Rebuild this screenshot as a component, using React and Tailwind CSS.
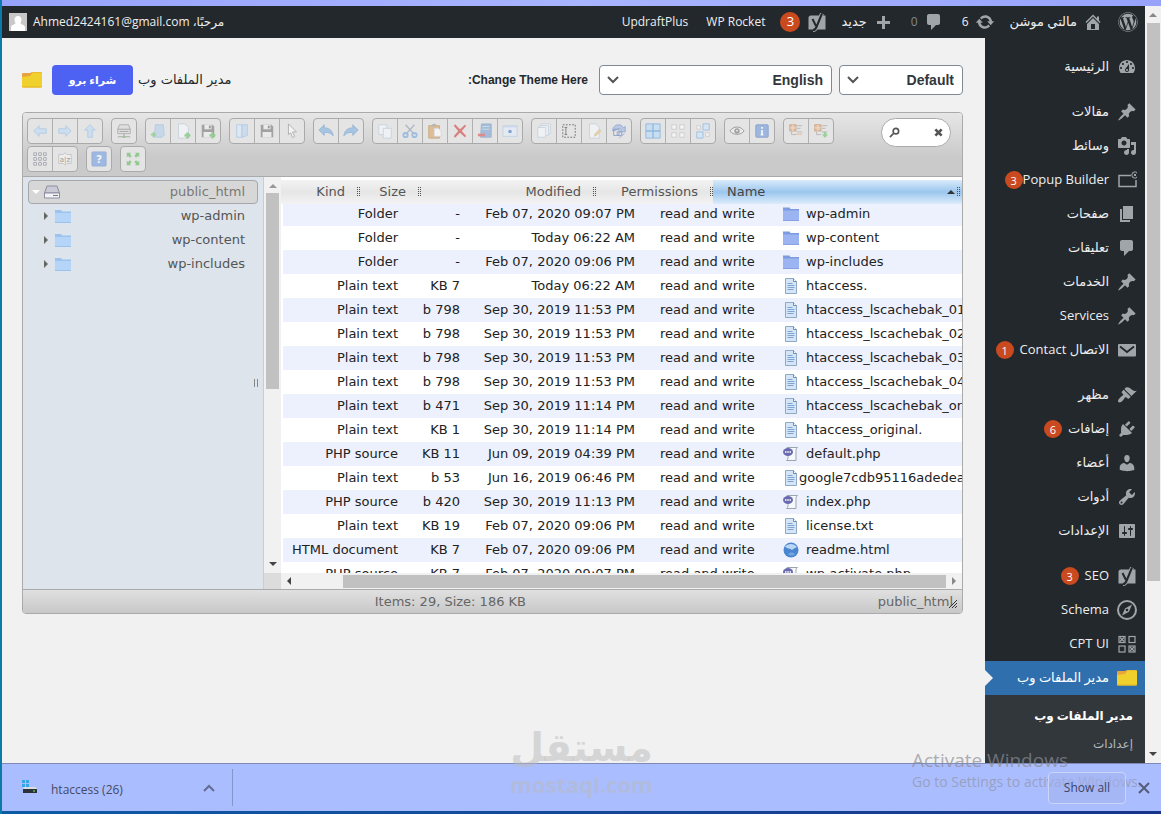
import { useState } from "react";
import { FaWordpress } from "react-icons/fa";

// Dashicons-style glyphs, 20x20 grid.
const glyphs = {
  dashboard:
    "M3.76 16h12.48c1.1-1.37 1.76-3.11 1.76-5 0-4.42-3.58-8-8-8s-8 3.58-8 8c0 1.89.66 3.63 1.76 5zM10 4c.55 0 1 .45 1 1s-.45 1-1 1-1-.45-1-1 .45-1 1-1zM6 6c.55 0 1 .45 1 1s-.45 1-1 1-1-.45-1-1 .45-1 1-1zm8 0c.55 0 1 .45 1 1s-.45 1-1 1-1-.45-1-1 .45-1 1-1zm-5.37 5.55L12 7v6c0 1.1-.9 2-2 2s-2-.9-2-2c0-.57.24-1.08.63-1.45zM4 10c.55 0 1 .45 1 1s-.45 1-1 1-1-.45-1-1 .45-1 1-1zm12 0c.55 0 1 .45 1 1s-.45 1-1 1-1-.45-1-1 .45-1 1-1zm-5 3c0-.55-.45-1-1-1s-1 .45-1 1 .45 1 1 1 1-.45 1-1z",
  pin: "M10.44 3.02l1.82-1.82 6.36 6.35-1.83 1.82c-1.05-.68-2.48-.57-3.41.36l-.75.75c-.92.93-1.04 2.35-.35 3.41l-1.83 1.82-2.41-2.41-2.8 2.79c-.42.42-3.38 2.71-3.8 2.29s1.86-3.39 2.28-3.81l2.79-2.79L4.1 9.36l1.83-1.82c1.05.69 2.48.57 3.4-.36l.75-.75c.93-.92 1.05-2.35.36-3.41z",
  media:
    "M13 11V4c0-.55-.45-1-1-1h-1.67L9 1H5L3.67 3H2c-.55 0-1 .45-1 1v7c0 .55.45 1 1 1h10c.55 0 1-.45 1-1zM7 4.500c1.38 0 2.500 1.120 2.500 2.500S8.380 9.500 7 9.500 4.500 8.380 4.500 7 5.620 4.500 7 4.500zM14 6h5v10.500c0 1.380-1.120 2.500-2.500 2.500S14 17.880 14 16.500s1.120-2.500 2.500-2.500c.17 0 .34.02.5.05V9h-3V6zm-4 8.050V13h2v3.500c0 1.380-1.120 2.500-2.500 2.500S7 17.880 7 16.500 8.120 14 9.500 14c.17 0 .34.02.5.05z",
  page: "M6 15V2h10v13H6zm-1 1h8v2H3V5h2v11z",
  comment:
    "M5 2h9c1.1 0 2 .9 2 2v7c0 1.1-.9 2-2 2h-2l-5 5v-5H5c-1.1 0-2-.9-2-2V4c0-1.1.9-2 2-2z",
  brush:
    "M14.48 11.06L7.41 3.99l1.5-1.5c.5-.56 2.3-.47 3.51.32 1.21.8 1.43 1.28 2.91 2.1 1.18.64 2.45 1.26 4.45.85zm-.71.71L6.7 4.7 4.93 6.47c-.39.39-.39 1.02 0 1.41l1.06 1.06c.39.39.39 1.03 0 1.42-.6.6-1.43 1.11-2.21 1.69-.35.26-.7.53-1.01.84C1.43 14.23.4 16.08 1.4 17.07c.99 1 2.84-.03 4.18-1.36.31-.31.58-.66.85-1.02.57-.78 1.08-1.61 1.69-2.21.39-.39 1.02-.39 1.41 0l1.06 1.06c.39.39 1.02.39 1.41 0z",
  plug: "M13.11 4.36L9.87 7.6 8 5.73l3.24-3.24c.35-.34 1.05-.2 1.56.32.52.51.66 1.21.31 1.55zm-8 1.77l.91-1.12 9.01 9.01-1.19.84c-.71.71-2.63 1.16-3.82 1.16H6.14L4.9 17.26c-.59.59-1.54.59-2.12 0-.59-.58-.59-1.53 0-2.12l1.24-1.24v-3.88c0-1.13.4-3.19 1.09-3.89zm7.26 3.97l3.24-3.24c.34-.35 1.04-.21 1.55.31.52.51.66 1.21.31 1.55l-3.24 3.25z",
  user: "M10 9.25c-2.27 0-2.73-3.44-2.73-3.44C7 4.02 7.82 2 9.97 2c2.16 0 2.98 2.02 2.71 3.81 0 0-.41 3.44-2.68 3.44zm0 2.57L12.72 10c2.39 0 4.52 2.33 4.52 4.53v2.49s-3.65 1.13-7.24 1.13c-3.65 0-7.24-1.13-7.24-1.13v-2.49c0-2.25 1.94-4.48 4.47-4.48z",
  wrench:
    "M16.68 9.77c-1.34 1.34-3.3 1.67-4.95.99l-5.41 6.52c-.99.99-2.59.99-3.58 0s-.99-2.59 0-3.57l6.52-5.42c-.68-1.65-.35-3.61.99-4.95 1.28-1.28 3.12-1.62 4.72-1.06l-2.89 2.89 2.82 2.82 2.86-2.87c.53 1.58.18 3.39-1.08 4.65zM3.81 16.21c.4.39 1.04.39 1.43 0 .4-.4.4-1.04 0-1.43-.39-.4-1.03-.4-1.43 0-.39.39-.39 1.03 0 1.43z",
  sliders:
    "M18 16V4c0-.55-.45-1-1-1H3c-.55 0-1 .45-1 1v12c0 .55.45 1 1 1h14c.55 0 1-.45 1-1zM8 11h1c.55 0 1 .45 1 1s-.45 1-1 1H8v1.5c0 .28-.22.5-.5.5s-.5-.22-.5-.5V13H6c-.55 0-1-.45-1-1s.45-1 1-1h1V5.5c0-.28.22-.5.5-.5s.5.22.5.5V11zm5-2h-1c-.55 0-1-.45-1-1s.45-1 1-1h1V5.5c0-.28.22-.5.5-.5s.5.22.5.5V7h1c.55 0 1 .45 1 1s-.45 1-1 1h-1v5.5c0 .28-.22.5-.5.5s-.5-.22-.5-.5V9z",
  home: "M16 8.5l1.53 1.53-1.06 1.06L10 4.6l-6.47 6.49-1.06-1.06L10 2.5l4 4v-2h2v4zm-6-2.46l6 5.99V18H4v-5.97zM12 17v-5H8v5h4z",
  update:
    "M10.2 3.28c3.53 0 6.43 2.61 6.92 6h2.08l-3.5 4-3.5-4h2.32c-.45-1.97-2.21-3.45-4.32-3.45-1.45 0-2.73.71-3.54 1.78L4.95 5.66C6.23 4.2 8.11 3.28 10.2 3.28zm-.4 13.44c-3.52 0-6.43-2.61-6.92-6H.8l3.5-4c1.17 1.33 2.33 2.67 3.5 4H5.48c.45 1.97 2.21 3.45 4.32 3.45 1.45 0 2.73-.71 3.54-1.78l1.71 1.95c-1.28 1.46-3.15 2.38-5.25 2.38z",
  plus: "M17 9v3h-5v5H9v-5H4V9h5V4h3v5h5z",
};

function Glyph({ name }) {
  if (name === "folder") return <YellowFolder />;
  return (
    <svg viewBox="0 0 20 20" className="size-5 shrink-0" fill="currentColor" fillRule="evenodd">
      {glyphs[name] && <path d={glyphs[name]} />}
      {name === "popup" && (
        <g fill="none" stroke="currentColor">
          <path d="M14 5.5H2v11h17V10" strokeWidth="1.5" />
          <circle cx="18" cy="5" r="3.2" />
          <path d="M16.7 3.7l2.6 2.6m0-2.6l-2.6 2.6" />
        </g>
      )}
      {name === "mail" && (
        <>
          <rect x="1" y="4" width="18" height="12.5" rx="1" />
          <path d="M3 6.5l7 5.5 7-5.5" fill="none" stroke="#23282d" strokeWidth="1.8" />
        </>
      )}
      {name === "yoast" && (
        <>
          <path d="M4 3.500h14.500v14H1.500V6A2.500 2.500 0 0 1 4 3.500z" />
          <path d="M5.500 7l3.500 7M15 1.500L9.500 15c-.8 2-1.700 3-3.500 3" fill="none" stroke="currentColor" strokeWidth="4" />
          <path d="M5.500 7l3.500 7M15 1.500L9.500 15c-.8 2-1.700 3-3.500 3" fill="none" stroke="#23282d" strokeWidth="2" />
        </>
      )}
      {name === "compass" && (
        <>
          <circle cx="10" cy="10" r="9" fill="none" stroke="currentColor" strokeWidth="2" />
          <path d="M15 4.500l-3 7.200L5 15.500l3-7z" />
          <circle cx="10" cy="10" r="1.300" fill="#23282d" />
        </>
      )}
      {name === "cpt" && (
        <g fill="none" stroke="currentColor" strokeWidth="1.200">
          <rect x="2" y="2.500" width="6" height="6" />
          <rect x="12" y="2.500" width="6" height="6" />
          <rect x="2" y="12" width="6" height="6" />
          <rect x="12" y="12" width="6" height="6" />
          <path d="M3 3.500l4 4m0-4l-4 4M13 13l4 4m0-4l-4 4" />
        </g>
      )}
    </svg>
  );
}

function YellowFolder() {
  return (
    <svg viewBox="0 0 20 16" className="h-4 w-5 shrink-0">
      <path d="M0 2a1 1 0 0 1 1-1h7l2-1h9a1 1 0 0 1 1 1v5H0z" fill="#e8a33d" />
      <path d="M0 5l8-1 2.500-3.500H19a1 1 0 0 1 1 1V14.500a1 1 0 0 1-1 1H1a1 1 0 0 1-1-1z" fill="#f0d02c" />
      <path d="M0 14.500h20a1 1 0 0 1-1 1H1a1 1 0 0 1-1-1z" fill="#e2b41f" />
    </svg>
  );
}

const menu = [
  [{ icon: "dashboard", label: "الرئيسية" }],
  [
    { icon: "pin", label: "مقالات" },
    { icon: "media", label: "وسائط" },
    { icon: "popup", label: "Popup Builder", count: 3, tight: true },
    { icon: "page", label: "صفحات" },
    { icon: "comment", label: "تعليقات" },
    { icon: "pin", label: "الخدمات" },
    { icon: "pin", label: "Services" },
    { icon: "mail", label: "الاتصال Contact", count: 1 },
  ],
  [
    { icon: "brush", label: "مظهر" },
    { icon: "plug", label: "إضافات", count: 6 },
    { icon: "user", label: "أعضاء" },
    { icon: "wrench", label: "أدوات" },
    { icon: "sliders", label: "الإعدادات" },
  ],
  [
    { icon: "yoast", label: "SEO", count: 3 },
    { icon: "compass", label: "Schema" },
    { icon: "cpt", label: "CPT UI" },
    { icon: "folder", label: "مدير الملفات وب", current: true },
  ],
];

// Toolbar drawings, 18x18 grid.
const blue = "#8fbbe8";
const page = "#f8fbff";
const arrow = "M2 9l6-6v3.500h8v5H8V15z";
const diskette = (
  <>
    <path d="M2 2h12l2 2v12H2z" fill="#777" />
    <path d="M5 2h8v5H5zM4 10h10v6H4z" fill="#eee" />
    <path d="M10 3h2v3h-2z" fill="#666" />
  </>
);
const paper = <path d="M4 1h7l4 4v12H4z" fill={page} stroke="#b5c7da" />;
const greenPlus = <path d="M11 13h2v-2h2v2h2v2h-2v2h-2v-2h-2z" fill="#65c965" stroke="#45a845" strokeWidth=".5" />;
const tree = (
  <>
    <rect x="2" y="2" width="7" height="7" fill="#e3a878" stroke="#bb8050" />
    <path d="M5.500 2v7M2 5.500h7" stroke="#f4dcc8" />
    <path d="M10 3h6M10 6h4M4 10v3h5M10 10h6" fill="none" stroke="#999" />
  </>
);

const tools = {
  back: <path d={arrow} fill="#bfdcf6" stroke={blue} />,
  forward: <path d={arrow} fill="#bfdcf6" stroke={blue} transform="rotate(180 9 9)" />,
  up: <path d={arrow} fill="#bfdcf6" stroke={blue} transform="rotate(90 9 9)" />,
  netmount: (
    <>
      <path d="M4 2h10l2 5v5H2V7z" fill="#ddd" stroke="#888" />
      <path d="M2 7h14M4 9.500h10M9 12v4M2 15.500h14" stroke="#777" />
      <circle cx="9" cy="15.500" r="1.500" fill="#5ab55a" />
    </>
  ),
  mkdir: (
    <>
      <path d="M6 2h9l1 12-3 2H5z" fill="#b4cfe9" stroke={blue} />
      <path d="M1 12h2v-2h2v2h2v2H5v2H3v-2H1z" fill="#65c965" />
    </>
  ),
  mkfile: <>{paper}{greenPlus}</>,
  upload: <>{diskette}{greenPlus}</>,
  open: (
    <>
      <path d="M3 2h6v14H3z" fill="#dcebfa" stroke={blue} />
      <path d="M9 2h6v12l-6 2z" fill="#bdd8f3" stroke={blue} />
    </>
  ),
  download: diskette,
  getfile: <path d="M5 1l9 9H9.500l2.500 5-2.500 1.500L7.500 11 5 13z" fill="#fff" stroke="#888" />,
  undo: <path d="M1 8l6-6v3.500c5 0 9 2 10 9-2-3-5-4-10-4V14z" fill="#7fb2e2" stroke="#6396c8" />,
  redo: <path d="M17 8l-6-6v3.500c-5 0-9 2-10 9 2-3 5-4 10-4V14z" fill="#7fb2e2" stroke="#6396c8" />,
  copy: (
    <>
      <path d="M2 2h9v11H2z" fill={page} stroke="#b5c7da" />
      <path d="M7 6h9v11H7z" fill={page} stroke="#b5c7da" />
    </>
  ),
  cut: (
    <>
      <path d="M4 2l10 11M14 2L4 13" stroke="#8b9db3" strokeWidth="1.500" />
      <circle cx="4" cy="13.500" r="2.500" fill="none" stroke="#6fa3dd" strokeWidth="2" />
      <circle cx="14" cy="13.500" r="2.500" fill="none" stroke="#6fa3dd" strokeWidth="2" />
    </>
  ),
  paste: (
    <>
      <path d="M2 3h12v14H2z" fill="#d8a362" stroke="#b58243" />
      <path d="M6 1h4v3H6z" fill="#999" />
      <path d="M8 6h5l3 3v6H8z" fill="#fff" stroke="#ccc" />
    </>
  ),
  rm: <path d="M2 3l1.500-1.500L9 7l5.500-5L16 3l-5 6 5 5.500-1.500 1.500L9 11l-5.500 5.500L2 15l5-6z" fill="#d0403c" />,
  empty: (
    <>
      <path d="M5 1h11v15H4z" fill="#7ba3d2" stroke="#6f97c4" />
      <path d="M6 4h8M6 7h8" stroke="#c8dcf2" />
      <path d="M1 12h8v3H1z" fill="#d9534f" />
    </>
  ),
  hide: (
    <>
      <path d="M1 3h16v12H1z" fill="#e5effa" stroke="#a9c4e2" />
      <path d="M1 3h16v2H1z" fill="#bcd3ee" />
      <circle cx="9" cy="9.500" r="2" fill="#3f78bf" />
    </>
  ),
  duplicate: (
    <>
      <path d="M6 1h10v11H6z" fill={page} stroke="#b5c7da" />
      <path d="M4 3h10v11H4z" fill={page} stroke="#b5c7da" />
      <path d="M2 5h9v11H2z" fill={page} stroke="#b5c7da" />
    </>
  ),
  rename: (
    <>
      <path d="M2 2h14v14H2z" fill="none" stroke="#222" strokeDasharray="2 1.500" />
      <path d="M4 5h3M4 13h3M5.500 5v8" stroke="#333" />
    </>
  ),
  edit: (
    <>
      {paper}
      <path d="M10 12l5-5 2 2-5 5-3 1z" fill="#e8c57a" stroke="#b8b08a" strokeWidth=".5" />
    </>
  ),
  resize: (
    <>
      <path d="M2 9a6.500 6.500 0 0 1 12-4l2-1v6h-6l2-2.500A4 4 0 0 0 6 8z" fill="#9bb7e6" stroke="#6684c4" />
      <path d="M3 7h6v7H3zM7 10h5v4H7z" fill="none" stroke="#5674bc" />
      <path d="M9 17l6-5" stroke="#6684c4" />
    </>
  ),
  selectall: (
    <>
      <path d="M1 1h16v16H1z" fill="#b9dafa" stroke="#5b9bd8" />
      <path d="M9 1v16M1 9h16" stroke="#5b9bd8" strokeWidth="1.500" />
    </>
  ),
  selectnone: <path d="M2 2h5v5H2zM11 2h5v5h-5zM2 11h5v5H2zM11 11h5v5h-5z" fill="#fff" stroke="#bbb" />,
  invert: (
    <>
      <path d="M9 1h7v7H9zM2 10h7v7H2z" fill="#cfe4fb" stroke="#6ea5e0" />
      <path d="M2 3h4v4H2zM12 11h4v4h-4z" fill="#fff" stroke="#bbb" />
    </>
  ),
  quicklook: (
    <>
      <path d="M1 9c4-6 12-6 16 0-4 5-12 5-16 0z" fill="#eee" stroke="#666" />
      <circle cx="9" cy="9" r="3" fill="#777" />
      <circle cx="9" cy="8.500" r="1" fill="#fff" />
    </>
  ),
  info: (
    <>
      <rect x="2" y="2" width="14" height="14" rx="1" fill="#6f98dc" stroke="#5078bd" />
      <path d="M9 4.500v2M9 8v5M7.500 13h3" stroke="#fff" strokeWidth="2" />
    </>
  ),
  extract: <>{tree}<path d="M9 12.500h7" stroke="#e0915a" /></>,
  archive: <>{tree}<path d="M12 10h3v3h2l-3.500 4-3.500-4h2z" fill="#65c965" /></>,
  view: (
    <path
      d="M2 2h3v3H2zM7.500 2h3v3h-3zM13 2h3v3h-3zM2 7.500h3v3H2zM7.500 7.500h3v3h-3zM13 7.500h3v3h-3zM2 13h3v3H2zM7.500 13h3v3h-3zM13 13h3v3h-3z"
      fill="#f6f6f6"
      stroke="#777788"
    />
  ),
  sort: (
    <>
      <path d="M2 4h5l2-2 2 2h5v10h-5l-2 2-2-2H2z" fill="#f6f6f6" stroke="#aaa" />
      <text x="9" y="12" textAnchor="middle" fontSize="8" fill="#666">a|z</text>
    </>
  ),
  help: (
    <>
      <rect x="1" y="1" width="16" height="16" rx="1" fill="#6f9be0" stroke="#6d92cd" />
      <text x="9" y="13.500" textAnchor="middle" fontSize="12" fontWeight="bold" fill="#fff">?</text>
    </>
  ),
  fullscreen: (
    <path
      d="M2 2h5L5.500 3.500l2 2-2 2-2-2L2 7zM16 2v5l-1.500-1.500-2 2-2-2 2-2L11 2zM2 16v-5l1.500 1.500 2-2 2 2-2 2L7 16zM16 16h-5l1.500-1.500-2-2 2-2 2 2L16 11z"
      fill="#5cb85c"
    />
  ),
};

const toolGroups = [
  ["back", "forward", "up"],
  ["netmount"],
  ["mkdir", "mkfile", "upload"],
  ["open", "download", "getfile"],
  ["undo", "redo"],
  ["copy", "cut", "paste", "rm", "empty", "hide"],
  ["duplicate", "rename", "edit", "resize"],
  ["selectall", "selectnone", "invert"],
  ["quicklook", "info"],
  ["extract", "archive"],
  ["view", "sort"],
  ["help"],
  ["fullscreen"],
];

const files = [
  ["Folder", "-", "Feb 07, 2020 09:07 PM", "folder", "wp-admin"],
  ["Folder", "-", "Today 06:22 AM", "folder", "wp-content"],
  ["Folder", "-", "Feb 07, 2020 09:06 PM", "folder", "wp-includes"],
  ["Plain text", "KB 7", "Today 06:22 AM", "text", "htaccess."],
  ["Plain text", "b 798", "Sep 30, 2019 11:53 PM", "text", "htaccess_lscachebak_01"],
  ["Plain text", "b 798", "Sep 30, 2019 11:53 PM", "text", "htaccess_lscachebak_02"],
  ["Plain text", "b 798", "Sep 30, 2019 11:53 PM", "text", "htaccess_lscachebak_03"],
  ["Plain text", "b 798", "Sep 30, 2019 11:53 PM", "text", "htaccess_lscachebak_04"],
  ["Plain text", "b 471", "Sep 30, 2019 11:14 PM", "text", "htaccess_lscachebak_ori"],
  ["Plain text", "KB 1", "Sep 30, 2019 11:14 PM", "text", "htaccess_original."],
  ["PHP source", "KB 11", "Jun 09, 2019 04:39 PM", "php", "default.php"],
  ["Plain text", "b 53", "Jun 16, 2019 06:46 PM", "text", "google7cdb95116adedea2"],
  ["PHP source", "b 420", "Sep 30, 2019 11:13 PM", "php", "index.php"],
  ["Plain text", "KB 19", "Feb 07, 2020 09:06 PM", "text", "license.txt"],
  ["HTML document", "KB 7", "Feb 07, 2020 09:06 PM", "html", "readme.html"],
  ["PHP source", "KB 7", "Feb 07, 2020 09:07 PM", "php", "wp-activate.php"],
];

function FileIcon({ type }) {
  return (
    <svg viewBox="0 0 16 16" className="size-4 shrink-0">
      {type === "folder" && (
        <>
          <path d="M0 1.500h6.500l1 1.500H16v11.500H0z" fill="#7d9ce0" />
          <path d="M0 4.500h16v10H0z" fill="#9db4f3" />
          <path d="M0 14h16v.8H0z" fill="#7f97dc" />
        </>
      )}
      {type === "text" && (
        <>
          <path d="M2.500.5h8l3 3v12h-11z" fill="#d3e5f7" stroke="#8fa9c4" />
          <path d="M10.500.5v3h3" fill="#fff" stroke="#6f8cab" />
          <path d="M4.500 5.500h5M4.500 7.500h7M4.500 9.500h7M4.500 11.500h6" stroke="#7fa5cf" />
        </>
      )}
      {type === "php" && (
        <>
          <path d="M4 1.500h10.500c-1.500 1-1.500 2-1.500 4v9H3.500c1.500-1 1.500-2 1.500-4z" fill="#f7f8fa" stroke="#9aa5b2" />
          <ellipse cx="5" cy="6" rx="5" ry="4" fill="#6a6bae" />
          <path d="M2 6h1.500M4.300 6h1.500M6.600 6H8" stroke="#fff" strokeWidth="1.500" />
        </>
      )}
      {type === "html" && (
        <>
          <circle cx="8" cy="8" r="7.500" fill="#4a86d0" />
          <path d="M2 4.500C5 1 11 1 14 5c-2 1.500-3 1-5 3-2-2-4-.5-7-3.500z" fill="#b9d7f5" />
          <path d="M5 12c2-2 5-2 7 0-2 2-5 2-7 0z" fill="#6fa6e4" />
        </>
      )}
    </svg>
  );
}

function Tri({ className, dir = "up" }) {
  const points = { up: "0,5 4,1 8,5", down: "0,1 4,5 8,1", left: "6,0 2,4 6,8", right: "2,0 6,4 2,8" };
  const vertical = dir === "left" || dir === "right";
  return (
    <svg viewBox={vertical ? "0 0 8 8" : "0 0 8 6"} className={`shrink-0 ${className}`} fill="currentColor">
      <polygon points={points[dir]} />
    </svg>
  );
}

function Chevron({ className }) {
  return (
    <svg viewBox="0 0 12 8" className={className} fill="none" stroke="currentColor" strokeWidth="2">
      <path d="M1 1l5 5 5-5" />
    </svg>
  );
}

function Grip() {
  return (
    <svg viewBox="0 0 3 10" className="h-[10px] w-[3px] shrink-0 text-neutral-600">
      <path d="M.5 0v10M2.500 0v10" stroke="currentColor" strokeDasharray="1 1" />
    </svg>
  );
}

function Count({ children }) {
  return (
    <span className="flex size-[18px] items-center justify-center rounded-full bg-[#ca4a1f] text-[11px] leading-none text-white">
      {children}
    </span>
  );
}

function AdminBar() {
  return (
    <header className="flex h-8 shrink-0 items-center justify-between bg-[#23282d] px-[7px] text-[12px] font-medium text-[#eee]">
      <nav className="flex items-center text-[#a0a5aa]">
        <a href="#wp" aria-label="WordPress"><FaWordpress className="size-[20px]" /></a>
        <a href="#site" className="ms-[15px] flex items-center gap-[6px]">
          <Glyph name="home" />
          <span className="text-[13px] text-[#eee]">مالتي موشن</span>
        </a>
        <a href="#updates" className="ms-[15px] flex items-center gap-[6px]">
          <Glyph name="update" />
          <span className="text-[#eee]">6</span>
        </a>
        <a href="#comments" className="ms-[18px] flex items-center gap-[6px]">
          <Glyph name="comment" />
          <span className="text-[#82878c]">0</span>
        </a>
        <a href="#new" className="ms-[18px] flex items-center gap-[6px]">
          <Glyph name="plus" />
          <span className="text-[13px] text-[#eee]">جديد</span>
        </a>
        <a href="#seo" className="ms-[14px] flex items-center gap-[7px]">
          <Glyph name="yoast" />
          <span className="flex size-5 items-center justify-center rounded-full bg-[#ca4a1f] text-[13px] text-white">3</span>
        </a>
        <a href="#rocket" className="ms-[15px] text-[#eee]">WP Rocket</a>
        <a href="#updraft" className="ms-[18px] text-[#eee]">UpdraftPlus</a>
      </nav>
      <a href="#profile" className="flex items-center gap-[6px]">
        <span dir="rtl">مرحبًا، Ahmed2424161@gmail.com</span>
        <svg viewBox="0 0 18 18" className="size-[18px]">
          <path d="M0 0h18v18H0z" fill="#c8c8c8" />
          <path d="M9 3a3.500 3.500 0 0 1 3.500 4c-.3 2-1 3-1 3 0 1.500 4 1.500 4.500 4v4H2v-4c.5-2.500 4.500-2.500 4.500-4 0 0-.7-1-1-3A3.500 3.500 0 0 1 9 3z" fill="#fff" />
        </svg>
      </a>
    </header>
  );
}

function Sidebar() {
  return (
    <aside className="w-40 shrink-0 bg-[#23282d] pt-3 text-[13px] font-medium text-[#eee]">
      <nav className="flex flex-col gap-[11px]">
        {menu.map((group, i) => (
          <ul key={i}>
            {group.map((item, j) => (
              <li key={j}>
                <a
                  href="#menu"
                  className={`relative flex h-[34px] items-center whitespace-nowrap ${item.current ? "bg-[#306fad] text-white" : ""}`}
                >
                  <span className="flex w-9 shrink-0 justify-center text-[#a0a5aa]">
                    <Glyph name={item.icon} />
                  </span>
                  <span className={`flex items-center ${item.tight ? "" : "gap-[6px]"}`}>
                    {item.label}
                    {item.count && <Count>{item.count}</Count>}
                  </span>
                  {item.current && (
                    <span className="absolute left-0 border-8 border-r-0 border-transparent border-l-[#f1f1f1]" />
                  )}
                </a>
              </li>
            ))}
          </ul>
        ))}
      </nav>
      <ul className="h-full bg-[#32373c] px-3 pt-[7px] text-[12px]">
        <li><a href="#fm" className="block font-bold leading-7 text-white">مدير الملفات وب</a></li>
        <li><a href="#settings" className="block leading-7 text-[#b4b9be]">إعدادات</a></li>
      </ul>
    </aside>
  );
}

function Picker({ label, value, className }) {
  return (
    <span className={`relative block h-[30px] ${className}`}>
      <select
        aria-label={label}
        defaultValue={value}
        className="h-full w-full appearance-none rounded-[4px] border border-[#7e8993] bg-white px-2 font-['Liberation_Sans',sans-serif] text-[14px] font-bold text-[#32373c]"
      >
        <option>{value}</option>
      </select>
      <Chevron className="pointer-events-none absolute left-2 top-[11px] h-2 w-3 text-[#555]" />
    </span>
  );
}

function Toolbar() {
  const [query, setQuery] = useState("");
  return (
    <div className="flex items-start border-b border-[#aaa] bg-linear-to-b from-[#e6e6e6] to-[#cacaca] to-70% px-1 pt-[5px] pb-1 pe-[11px]">
      <div className="flex flex-1 flex-wrap gap-x-[8px] gap-y-[2px]">
        {toolGroups.map((group, i) => (
          <div key={i} className="flex overflow-hidden rounded-[4px] border border-[#aaa] bg-[#e4e4e4]">
            {group.map((name) => (
              <button
                key={name}
                type="button"
                aria-label={name}
                className="flex h-6 w-[25px] items-center justify-center border-l border-[#b0b0b0] first:w-6 first:border-l-0"
              >
                <svg viewBox="0 0 18 18" className="size-4 opacity-60">
                  {tools[name]}
                </svg>
              </button>
            ))}
          </div>
        ))}
      </div>
      <label className="flex h-[29px] w-[70px] items-center gap-1 rounded-full border border-[#aaa] bg-white px-[7px]">
        <svg viewBox="0 0 12 12" className="size-[11px] shrink-0" fill="none" stroke="#555" strokeWidth="1.800">
          <circle cx="7.500" cy="4.500" r="3" />
          <path d="M5 7l-4 4" />
        </svg>
        <input
          aria-label="Search"
          value={query}
          onChange={(e) => setQuery(e.target.value)}
          className="w-0 min-w-0 flex-1 outline-none"
        />
        <svg viewBox="0 0 10 10" className="size-[9px] shrink-0" stroke="#555" strokeWidth="3">
          <path d="M1.500 1.500l7 7m0-7l-7 7" />
        </svg>
      </label>
    </div>
  );
}

function Tree() {
  return (
    <div className="flex w-[258px] shrink-0">
      <ul className="flex-1 border-r border-[#c9ced4] bg-[#dde4eb] px-[5px] pt-[3px] text-[#555]">
        <li className="flex h-6 items-center rounded-[4px] border border-[#a5a7ac] bg-[#d8d7d7] pe-3 ps-[3px] text-[#777]">
          <Tri dir="down" className="me-1 h-[6px] w-2 text-white" />
          <svg viewBox="0 0 16 14" className="h-[14px] w-4">
            <path d="M3 1h10l2.500 7H.5z" fill="#c9cad6" stroke="#8c8da0" />
            <path d="M.5 8h15v5H.5z" fill="#f4f4f8" stroke="#8c8da0" />
            <path d="M9 10.500h5" stroke="#777" />
          </svg>
          <span className="ms-auto">public_html</span>
        </li>
        {["wp-admin", "wp-content", "wp-includes"].map((name) => (
          <li key={name} className="flex h-6 items-center pe-[13px] ps-[14px]">
            <Tri dir="right" className="me-[5px] size-2 text-[#666]" />
            <svg viewBox="0 0 16 14" className="h-[14px] w-4">
              <path d="M0 1h6l1 1.500h9V14H0z" fill="#9cc2ef" />
              <path d="M0 4h16v9H0z" fill="#b5d5f8" />
            </svg>
            <span className="ms-auto">{name}</span>
          </li>
        ))}
      </ul>
      <div className="flex w-[17px] flex-col items-center bg-[#f1f1f1] pt-[6px]">
        <Tri className="h-[6px] w-2 text-[#999]" />
        <div className="mt-1 h-[196px] w-[13px] bg-[#c1c1c1]" />
        <Tri dir="down" className="mt-auto h-[6px] w-2 text-[#444]" />
        <div className="mt-[6px] h-[16px] w-full bg-[#dcdcdc]" />
      </div>
    </div>
  );
}

function FileList() {
  return (
    <div className="flex min-w-0 flex-1 flex-col bg-white pt-[3px]">
      <table className="relative w-full table-fixed bg-linear-to-b from-[#f3f3f3] via-[#e6e6e6] to-[#f3f3f3] text-[#555]">
        <colgroup>
          <col className="w-[79px]" />
          <col className="w-[61px]" />
          <col className="w-[175px]" />
          <col className="w-[117px]" />
          <col />
        </colgroup>
        <thead>
          <tr className="h-6">
            {["Kind", "Size", "Modified", "Permissions"].map((name) => (
              <th key={name} scope="col" className="p-0 font-normal">
                <span className="flex items-center justify-end gap-3">
                  {name}
                  <Grip />
                </span>
              </th>
            ))}
            <th scope="col" className="bg-linear-to-b from-[#d9ebfa] via-[#9bc6ee] to-[#dcecfb] p-0 font-normal text-[#444]">
              <span className="flex items-center gap-[2px] ps-[14px] pe-[2px]">
                Name
                <Tri className="ms-auto h-[6px] w-2 text-[#333]" />
                <Grip />
              </span>
            </th>
          </tr>
        </thead>
      </table>
      <div className="min-h-0 flex-1 overflow-hidden ps-[2px]">
        <table className="-mt-[2px] w-full table-fixed whitespace-nowrap text-[#222]">
          <colgroup>
            <col className="w-[127px]" />
            <col className="w-[62px]" />
            <col className="w-[175px]" />
            <col className="w-[136px]" />
            <col />
          </colgroup>
          <tbody>
            {files.map(([kind, size, modified, type, name]) => (
              <tr key={name} className="h-6 odd:bg-[#edf1fd]">
                <td className="p-0 pe-3 text-right">{kind}</td>
                <td className="p-0 pe-3 text-right">{size}</td>
                <td className="p-0 pe-3 text-right">{modified}</td>
                <td className="p-0 ps-[13px]">read and write</td>
                <td className="overflow-hidden p-0">
                  <span className={`flex items-center ${name.startsWith("google") ? "gap-0" : "gap-[7px]"}`}>
                    <FileIcon type={type} />
                    {name}
                  </span>
                </td>
              </tr>
            ))}
          </tbody>
        </table>
      </div>
      <div className="flex h-4 shrink-0 items-center bg-[#f1f1f1] px-1 text-[#444]">
        <Tri dir="left" className="size-2" />
        <div className="ms-[50px] me-1 h-[13px] flex-1 bg-[#c1c1c1]" />
        <Tri dir="right" className="size-2 text-[#888]" />
      </div>
    </div>
  );
}

function FileManager() {
  return (
    <section
      dir="ltr"
      className="overflow-hidden rounded-[4px] border border-[#aaa] font-['DejaVu_Sans',sans-serif] text-[13px]"
    >
      <Toolbar />
      <div className="relative flex h-[412px]">
        <Tree />
        <FileList />
        <span className="absolute left-[231px] top-[202px] h-2 w-1 border-x border-[#888]" />
      </div>
      <footer className="flex h-6 items-center border-t border-[#aaa] bg-linear-to-b from-[#e0e0e0] to-[#c8c8c8] pe-[5px] text-[#666]">
        <span className="flex-1 text-center">Items: 29, Size: 186 KB</span>
        <span>public_html</span>
        <svg viewBox="0 0 8 8" className="-ms-1 mt-1 size-2" stroke="#333">
          <path d="M0 8l8-8M3 8l5-5M6 8l2-2" />
        </svg>
      </footer>
    </section>
  );
}

export default function App() {
  return (
    <div className="relative flex h-screen flex-col overflow-hidden border-l-2 border-[#0a7aa8] bg-[#f1f1f1] font-['Open_Sans','DejaVu_Sans',sans-serif]">
      <div className="h-[6px] shrink-0 bg-linear-to-r from-[#97a3fb] via-[#a9b4ff] to-[#97a3fb]" />
      <div className="flex min-h-0 flex-1">
        <div dir="rtl" className="flex min-w-0 flex-1 flex-col overflow-hidden">
          <AdminBar />
          <div className="flex min-h-0 flex-1">
            <Sidebar />
            <main className="min-w-0 flex-1 ps-[22px] pe-5 pt-[27px]">
              <div className="mb-[17px] flex items-center">
                <Picker label="Theme" value="Default" className="w-[124px]" />
                <Picker label="Language" value="English" className="ms-[7px] w-[233px]" />
                <span className="ms-[11px] font-['Liberation_Sans',sans-serif] text-[12px] font-bold text-[#23282d]">
                  Change Theme Here:
                </span>
                <h1 className="ms-auto font-['DejaVu_Sans',sans-serif] text-[13px] text-[#23282d]">مدير الملفات وب</h1>
                <button type="button" className="ms-[5px] me-[10px] h-[30px] w-[81px] rounded-[4px] bg-[#4d62f2] text-[11px] font-semibold text-white">
                  شراء برو
                </button>
                <YellowFolder />
              </div>
              <FileManager />
            </main>
          </div>
        </div>
        <div className="flex w-4 shrink-0 flex-col items-center bg-[#f1f1f1] pt-[6px] pb-[6px]">
          <Tri className="h-[6px] w-2 text-[#888]" />
          <div className="mt-[5px] w-[13px] flex-[558] bg-[#c1c1c1]" />
          <div className="flex-[170]" />
          <Tri dir="down" className="h-[6px] w-2 text-[#444]" />
        </div>
      </div>

      <footer className="flex h-[48px] shrink-0 items-center border-t border-[#7f8ab8] bg-[#aabdff] pe-[11px] ps-[19px] text-[#444b63]">
        <svg viewBox="0 0 17 17" className="size-[17px]">
          <path d="M1 1h3v3H1zM5 1h3v3H5zM1 5h3v3H1zM5 5h3v3H5z" fill="#35a7e8" />
          <path d="M3 8h12l1 2H2z" fill="#d8dde0" />
          <path d="M2 10h14v4H2z" fill="#2b3338" />
          <path d="M12 12h2" stroke="#6f6" />
        </svg>
        <span className="ms-[13px] w-[152px] pt-1 text-[12px]">htaccess (26)</span>
        <Chevron className="me-[17px] h-2 w-3 rotate-180 text-[#636c93]" />
        <span className="h-[37px] border-l border-[#8494cf]" />
        <button type="button" className="relative z-10 ms-auto h-8 w-[78px] rounded-[4px] border border-[#cbd5f7] bg-[#a3b3ee]/60 text-[12px] text-[#3c4468]">
          Show all
        </button>
        <button type="button" aria-label="Close" className="ms-3">
          <svg viewBox="0 0 12 12" className="size-3" stroke="#555c78" strokeWidth="2">
            <path d="M1 1l10 10M11 1L1 11" />
          </svg>
        </button>
      </footer>
      <div className="h-[3px] shrink-0 bg-linear-to-r from-[#0d5ba5] to-[#17348c]" />

      <div className="pointer-events-none absolute bottom-4 left-1/2 flex -translate-x-1/2 flex-col items-center text-[#b9b9b9]/50">
        <p className="font-['DejaVu_Sans',sans-serif] text-[39px] font-bold leading-[44px]">مستقل</p>
        <p className="text-[22px] font-bold leading-7">mostaql.com</p>
      </div>
      <div className="pointer-events-none absolute bottom-[22px] right-4 w-[233px] whitespace-nowrap text-[#8c8c94]/70">
        <p className="text-[19px] leading-6">Activate Windows</p>
        <p className="text-[14px] leading-5 text-[#8c8c94]/60">Go to Settings to activate Windows.</p>
      </div>
    </div>
  );
}
